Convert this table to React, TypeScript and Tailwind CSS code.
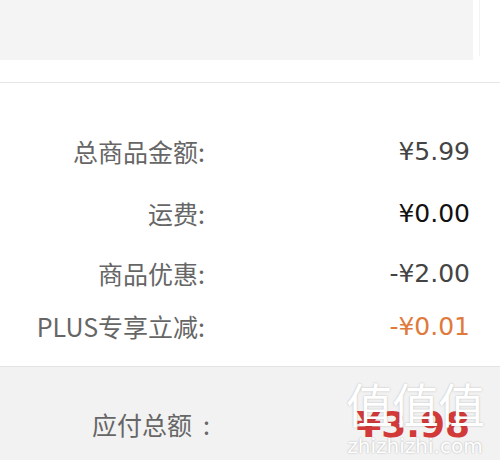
export default function App() {
  const rows = [
    { label: "总商品金额:", value: "¥5.99", tone: "text-[#444]", gap: "mt-[53px]" },
    { label: "运费:", value: "¥0.00", tone: "text-[#111]", gap: "mt-[32px]" },
    { label: "商品优惠:", value: "-¥2.00", tone: "text-[#444]", gap: "mt-[30px]" },
    { label: "PLUS专享立减:", value: "-¥0.01", tone: "text-[#e07a3c]", gap: "mt-[23px]" },
  ];

  return (
    <main className="w-[500px] h-[460px] bg-white overflow-hidden flex flex-col font-['Noto_Sans_CJK_SC',sans-serif]">
      {/* Top card */}
      <div className="flex h-[83px] shrink-0 border-b border-[#e6e6e6]">
        <div className="w-[473px] h-[60px] bg-[#f4f4f4]" />
        <div className="ml-[6px] w-px h-[56px] bg-[#f3f3f3]" />
      </div>

      {/* Price rows */}
      <div className="h-[284px] shrink-0 flex flex-col border-b border-[#e4e4e4]">
        {rows.map((r) => (
          <div key={r.label} className={`flex items-center h-[30px] ${r.gap}`}>
            <span className="w-[205px] text-right text-[25px] text-[#666] leading-none">
              {r.label}
            </span>
            <span
              className={`flex-1 pr-[30px] text-right text-[25px] leading-none font-['DejaVu_Sans',sans-serif] ${r.tone}`}
            >
              {r.value}
            </span>
          </div>
        ))}
      </div>

      {/* Total */}
      <div className="relative flex-1 bg-[#f2f2f2] flex items-center pt-[22px]">
        <span className="w-[210px] flex justify-end text-[25px] text-[#666] leading-none">
          <span>应付总额</span>
          <span className="ml-[11px]">:</span>
        </span>
        <span className="flex-1 pr-[30px] text-right text-[36px] font-bold leading-none text-[#d23a3a] font-['DejaVu_Sans',sans-serif]">
          ¥3.98
        </span>

        {/* watermark */}
        <div className="absolute left-[346px] top-[12px] flex flex-col items-center text-white">
          <span className="text-[47px] leading-none tracking-[-1px] [text-shadow:0_0_2px_rgba(0,0,0,0.25)]">
            值值值
          </span>
          <span className="mt-[10px] text-[20px] leading-none font-['DejaVu_Sans',sans-serif] [text-shadow:0_0_2px_rgba(0,0,0,0.3)]">
            zhizhizhi.com
          </span>
        </div>
      </div>
    </main>
  );
}
